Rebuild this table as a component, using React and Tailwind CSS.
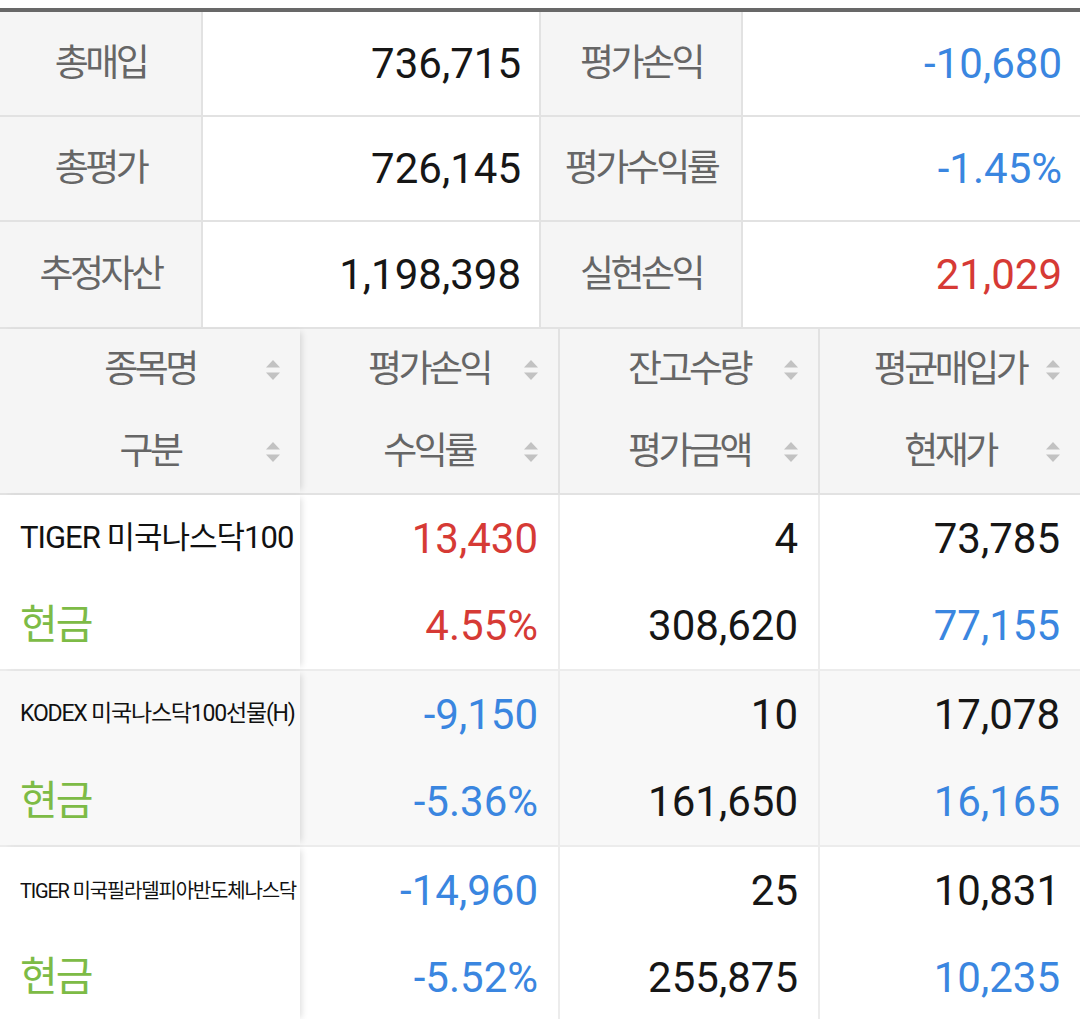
import React from 'react'

const FONT = { fontFamily: 'Roboto, "Noto Sans CJK KR", sans-serif' }

const summary = [
  ['총매입', '736,715', '평가손익', '-10,680', 'text-[#3a86e0]'],
  ['총평가', '726,145', '평가수익률', '-1.45%', 'text-[#3a86e0]'],
  ['추정자산', '1,198,398', '실현손익', '21,029', 'text-[#d63a35]'],
]

const RED = 'text-[#d63a35]'
const BLUE = 'text-[#3a86e0]'
const BLACK = 'text-[#161616]'

const rows = [
  {
    name: 'TIGER 미국나스닥100',
    nameCls: 'text-[31px] tracking-[-1px]',
    pl: ['13,430', RED],
    rate: ['4.55%', RED],
    qty: '4',
    amount: '308,620',
    avg: '73,785',
    cur: ['77,155', BLUE],
    bg: 'bg-white',
  },
  {
    name: 'KODEX 미국나스닥100선물(H)',
    nameCls: 'text-[23px] tracking-[-1.2px]',
    pl: ['-9,150', BLUE],
    rate: ['-5.36%', BLUE],
    qty: '10',
    amount: '161,650',
    avg: '17,078',
    cur: ['16,165', BLUE],
    bg: 'bg-[#f8f8f8]',
  },
  {
    name: 'TIGER 미국필라델피아반도체나스닥',
    nameCls: 'text-[20px] tracking-[-1.2px]',
    pl: ['-14,960', BLUE],
    rate: ['-5.52%', BLUE],
    qty: '25',
    amount: '255,875',
    avg: '10,831',
    cur: ['10,235', BLUE],
    bg: 'bg-white',
  },
]

function SortIcon() {
  return (
    <svg width="14" height="22" viewBox="0 0 14 22" className="absolute right-[20px] top-1/2 -translate-y-1/2">
      <polygon points="0,8.5 7,1 14,8.5" fill="#c2c2c2" />
      <polygon points="0,13.5 14,13.5 7,21" fill="#c2c2c2" />
    </svg>
  )
}

function HeadCell({ children }) {
  return (
    <div className="relative h-[82px] flex items-center justify-center text-[37px] tracking-[-3.5px] text-[#666]">
      {children}
      <SortIcon />
    </div>
  )
}

function Num({ children, cls = BLACK }) {
  return (
    <div className={`h-[87px] flex items-center justify-end pr-[20px] text-[42px] ${cls}`}>{children}</div>
  )
}

export default function App() {
  return (
    <div className="w-[1080px] h-[1019px] overflow-hidden bg-white pt-2" style={FONT}>
      {/* 요약 */}
      <div className="border-t-4 border-[#686868]">
        {summary.map(([l1, v1, l2, v2, c2], i) => (
          <div
            key={l1}
            className={`grid grid-cols-[203px_338px_202px_1fr] border-b-2 border-[#e2e2e2] ${i === 2 ? 'h-[107px]' : 'h-[105px]'}`}
          >
            <div className="bg-[#f5f5f5] border-r-2 border-[#e2e2e2] flex items-center justify-center text-[37px] tracking-[-3.5px] text-[#666]">
              {l1}
            </div>
            <div className="border-r-2 border-[#e2e2e2] flex items-center justify-end pr-[18px] text-[42px] text-[#161616]">
              {v1}
            </div>
            <div className="bg-[#f5f5f5] border-r-2 border-[#e2e2e2] flex items-center justify-center text-[37px] tracking-[-3.5px] text-[#666]">
              {l2}
            </div>
            <div className={`flex items-center justify-end pr-[18px] text-[42px] ${c2}`}>{v2}</div>
          </div>
        ))}
      </div>

      {/* 헤더 */}
      <div className="grid grid-cols-[300px_260px_260px_1fr] bg-[#f5f5f5] border-b-2 border-[#e2e2e2]">
        <div className="relative z-10 shadow-[5px_0_6px_-3px_rgba(0,0,0,0.12)] bg-[#f5f5f5]">
          <HeadCell>종목명</HeadCell>
          <HeadCell>구분</HeadCell>
        </div>
        <div className="border-r-2 border-[#e2e2e2]">
          <HeadCell>평가손익</HeadCell>
          <HeadCell>수익률</HeadCell>
        </div>
        <div className="border-r-2 border-[#e2e2e2]">
          <HeadCell>잔고수량</HeadCell>
          <HeadCell>평가금액</HeadCell>
        </div>
        <div>
          <HeadCell>평균매입가</HeadCell>
          <HeadCell>현재가</HeadCell>
        </div>
      </div>

      {/* 종목 */}
      {rows.map((r) => (
        <div key={r.name} className={`grid grid-cols-[300px_260px_260px_1fr] border-b-2 border-[#ececec] ${r.bg}`}>
          <div className={`relative z-10 shadow-[5px_0_6px_-3px_rgba(0,0,0,0.12)] pl-[20px] ${r.bg}`}>
            <div className={`h-[87px] flex items-center whitespace-nowrap text-[#111] ${r.nameCls}`}>{r.name}</div>
            <div className="h-[87px] flex items-center text-[41px] tracking-[-2px] text-[#7dbb46]">현금</div>
          </div>
          <div className="border-r-2 border-[#ececec]">
            <Num cls={r.pl[1]}>{r.pl[0]}</Num>
            <Num cls={r.rate[1]}>{r.rate[0]}</Num>
          </div>
          <div className="border-r-2 border-[#ececec]">
            <Num>{r.qty}</Num>
            <Num>{r.amount}</Num>
          </div>
          <div>
            <Num>{r.avg}</Num>
            <Num cls={r.cur[1]}>{r.cur[0]}</Num>
          </div>
        </div>
      ))}
    </div>
  )
}
